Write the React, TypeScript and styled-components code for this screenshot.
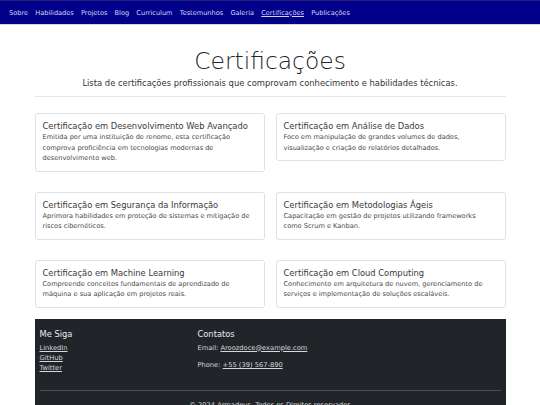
import React from "react";
import styled, { createGlobalStyle } from "styled-components";

const Global = createGlobalStyle`
  html, body { margin: 0; padding: 0; background: #fff; }
  body { font-family: "DejaVu Sans", Verdana, sans-serif; color: #212529; }
  * { box-sizing: border-box; }
`;

const NavBar = styled.nav`
  background: #00008b;
  height: 25px;
  border-top: 1px solid #2a1f7a;
  border-bottom: 1px solid #e6d7c3;
  display: flex;
  align-items: center;
  padding: 0 9px;
  gap: 7.2px;
`;

const NavLink = styled.a<{ $active?: boolean }>`
  font-size: 6.6px;
  color: #d4d4f4;
  text-decoration: ${(p) => (p.$active ? "underline" : "none")};
  white-space: nowrap;
`;

const Container = styled.main`
  width: 471px;
  margin: 0 auto;
`;

const Header = styled.header`
  text-align: center;
  padding-top: 22px;
  border-bottom: 1px solid #e6e6e6;
  padding-bottom: 7px;
`;

const Title = styled.h1`
  margin: 0;
  font-size: 23.4px;
  font-weight: 300;
  line-height: 28px;
  color: #212529;
`;

const Subtitle = styled.p`
  margin: 2px 0 0;
  font-size: 8.4px;
  line-height: 12px;
  color: #333;
`;

const Grid = styled.section`
  display: grid;
  grid-template-columns: 1fr 1fr;
  column-gap: 11px;
  row-gap: 20px;
  align-items: start;
  margin-top: 16px;
`;

const Card = styled.article`
  border: 1px solid #dee2e6;
  border-radius: 3px;
  padding: 7px 13px 7px 7px;
`;

const CardTitle = styled.h5`
  margin: 0;
  font-size: 8.35px;
  font-weight: 400;
  line-height: 11px;
  color: #3a3a3a;
  white-space: nowrap;
`;

const CardText = styled.p`
  margin: 0;
  font-size: 6.6px;
  line-height: 10.5px;
  color: #4a4a4a;
`;

const Footer = styled.footer`
  width: 471px;
  margin: 11px auto 0;
  background: #212529;
  color: #e9ecef;
  padding: 10px 5px 0;
`;

const FooterRow = styled.div`
  display: grid;
  grid-template-columns: 158px 158px 1fr;
  align-items: start;
  padding-bottom: 17px;
  border-bottom: 1px solid #4a4f54;
`;

const FooterCol = styled.div`
  display: flex;
  flex-direction: column;
  align-items: flex-start;
`;

const FooterHeading = styled.h5`
  margin: 0 0 3px;
  font-size: 8.3px;
  font-weight: 400;
  line-height: 11px;
  color: #e9ecef;
`;

const FooterLink = styled.a`
  font-size: 6.7px;
  line-height: 10px;
  color: #d6d8da;
  text-decoration: underline;
`;

const FooterText = styled.p`
  margin: 0 0 7px;
  font-size: 6.7px;
  line-height: 10px;
  color: #d6d8da;

  &:last-child {
    margin-bottom: 0;
  }
`;

const Copy = styled.p`
  margin: 0;
  padding: 9px 0 8px;
  text-align: center;
  font-size: 6.7px;
  line-height: 10px;
  color: #d6d8da;
`;

const navItems = [
  "Sobre",
  "Habilidades",
  "Projetos",
  "Blog",
  "Curriculum",
  "Testemunhos",
  "Galeria",
  "Certificações",
  "Publicações",
];

const certs = [
  {
    t: "Certificação em Desenvolvimento Web Avançado",
    d: "Emitida por uma instituição de renome, esta certificação comprova proficiência em tecnologias modernas de desenvolvimento web.",
  },
  {
    t: "Certificação em Análise de Dados",
    d: "Foco em manipulação de grandes volumes de dados, visualização e criação de relatórios detalhados.",
  },
  {
    t: "Certificação em Segurança da Informação",
    d: "Aprimora habilidades em proteção de sistemas e mitigação de riscos cibernéticos.",
  },
  {
    t: "Certificação em Metodologias Ágeis",
    d: "Capacitação em gestão de projetos utilizando frameworks como Scrum e Kanban.",
  },
  {
    t: "Certificação em Machine Learning",
    d: "Compreende conceitos fundamentais de aprendizado de máquina e sua aplicação em projetos reais.",
  },
  {
    t: "Certificação em Cloud Computing",
    d: "Conhecimento em arquitetura de nuvem, gerenciamento de serviços e implementação de soluções escaláveis.",
  },
];

export default function App() {
  return (
    <>
      <Global />
      <NavBar>
        {navItems.map((n) => (
          <NavLink key={n} href="#" $active={n === "Certificações"}>
            {n}
          </NavLink>
        ))}
      </NavBar>
      <Container>
        <Header>
          <Title>Certificações</Title>
          <Subtitle>
            Lista de certificações profissionais que comprovam conhecimento e habilidades técnicas.
          </Subtitle>
        </Header>
        <Grid>
          {certs.map((c) => (
            <Card key={c.t}>
              <CardTitle>{c.t}</CardTitle>
              <CardText>{c.d}</CardText>
            </Card>
          ))}
        </Grid>
      </Container>
      <Footer>
        <FooterRow>
          <FooterCol>
            <FooterHeading>Me Siga</FooterHeading>
            <FooterLink href="#">LinkedIn</FooterLink>
            <FooterLink href="#">GitHub</FooterLink>
            <FooterLink href="#">Twitter</FooterLink>
          </FooterCol>
          <FooterCol>
            <FooterHeading>Contatos</FooterHeading>
            <FooterText>
              Email: <FooterLink href="#">Aroozdoce@example.com</FooterLink>
            </FooterText>
            <FooterText>
              Phone: <FooterLink href="#">+55 (39) 567-890</FooterLink>
            </FooterText>
          </FooterCol>
          <FooterCol />
        </FooterRow>
        <Copy>© 2024 Armadeus. Todos os Direitos reservados</Copy>
      </Footer>
    </>
  );
}
